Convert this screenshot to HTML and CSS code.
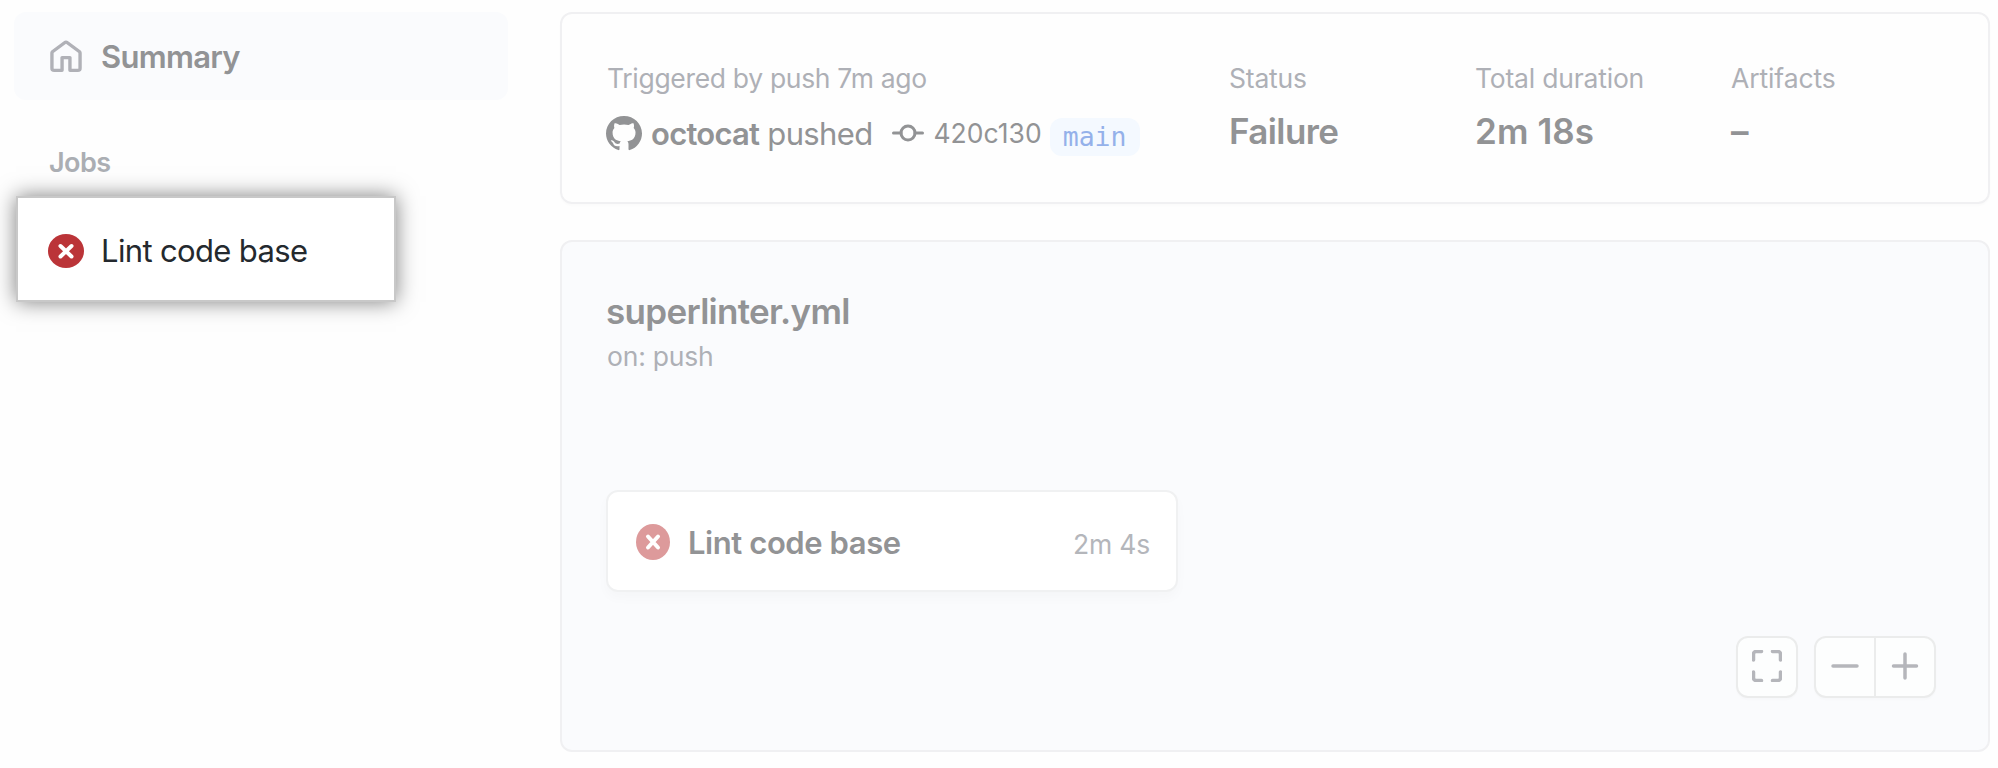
FILE: index.html
```html
<!DOCTYPE html>
<html lang="en"><head><meta charset="utf-8"><title>Workflow run</title><link rel="stylesheet" href="styles.css"></head>
<body>
<aside class="sidebar">
  <a class="nav-item"><svg class="home" width="36" height="34" viewBox="0 0 16 16" preserveAspectRatio="none"><path d="M6.906.664a1.749 1.749 0 0 1 2.187 0l5.250 4.200c.415.332.657.835.657 1.367v7.019A1.750 1.750 0 0 1 13.250 15h-3.500a.75.75 0 0 1-.75-.75V9H7v5.250a.75.75 0 0 1-.75.75h-3.500A1.750 1.750 0 0 1 1 13.250V6.230c0-.531.242-1.034.657-1.366l5.250-4.200Zm1.250 1.171a.25.25 0 0 0-.312 0l-5.250 4.200a.25.25 0 0 0-.094.196v7.019c0 .138.112.25.25.25H5.500V8.250a.75.75 0 0 1 .75-.75h3.500a.75.75 0 0 1 .75.75v5.250h2.750a.25.25 0 0 0 .25-.25V6.230a.25.25 0 0 0-.094-.195Z"/></svg><span>Summary</span></a>
  <h2 class="jobs-title">Jobs</h2>
  <a class="job-link"><svg width="36" height="34" viewBox="0 0 36 34"><ellipse class="red" cx="18" cy="17" rx="18" ry="17"/><path class="cross" d="M12.500 12l11 10.500M23.500 12l-11 10.500"/></svg><span>Lint code base</span></a>
</aside>
<main class="main">
  <section class="card run">
    <div>
      <div class="label trigger-label">Triggered by push 7m ago</div>
      <div class="trigger"><svg class="mark" width="36" height="35" viewBox="0 0 16 16" preserveAspectRatio="none"><path d="M8 0C3.580 0 0 3.580 0 8c0 3.540 2.290 6.530 5.470 7.590.4.070.55-.17.55-.38 0-.19-.01-.82-.01-1.490-2.010.37-2.530-.49-2.690-.94-.09-.23-.48-.94-.82-1.130-.28-.15-.68-.52-.01-.53.63-.01 1.080.58 1.230.82.72 1.210 1.870.87 2.330.66.07-.52.28-.87.51-1.070-1.780-.2-3.640-.89-3.640-3.950 0-.87.31-1.590.82-2.150-.08-.2-.36-1.020.08-2.120 0 0 .67-.21 2.200.82.64-.18 1.320-.27 2-.27s1.360.09 2 .27c1.530-1.040 2.200-.82 2.200-.82.44 1.100.16 1.920.08 2.120.51.56.82 1.270.82 2.150 0 3.070-1.870 3.750-3.650 3.950.29.25.54.73.54 1.480 0 1.070-.01 1.930-.01 2.200 0 .21.15.46.55.38A8.010 8.010 0 0 0 16 8c0-4.420-3.580-8-8-8z"/></svg>
        <b class="actor">octocat</b><span class="verb">pushed</span>
        <svg class="commit" width="32" height="20" viewBox="0 0 32 20"><circle cx="16" cy="10" r="7"/><path d="M1.500 10H9M23 10h7.500"/></svg>
        <span class="sha">420c130</span><span class="branch">main</span>
      </div>
    </div>
    <div><div class="label">Status</div><div class="value">Failure</div></div>
    <div><div class="label">Total duration</div><div class="value duration">2m 18s</div></div>
    <div><div class="label artifacts">Artifacts</div><div class="value">–</div></div>
  </section>
  <section class="card graph">
    <h1 class="file">superlinter.yml</h1>
    <div class="event">on: push</div>
    <div class="node"><svg width="34" height="36" viewBox="0 0 34 36"><ellipse class="red" cx="17" cy="18" rx="17" ry="18"/><path class="cross" d="M12 12.500l10 11M22 12.500l-10 11"/></svg><span class="node-name">Lint code base</span><span class="time">2m 4s</span></div>
    <div class="controls">
      <span class="btn"><svg width="30" height="32" viewBox="0 0 30 32"><path d="M9.500 1.500H4a2.500 2.500 0 0 0-2.500 2.500v6M20.500 1.500H26a2.500 2.500 0 0 1 2.500 2.500v6M9.500 30.500H4a2.500 2.500 0 0 1-2.500-2.500v-6M20.500 30.500H26a2.500 2.500 0 0 0 2.500-2.500v-6"/></svg></span>
      <span class="group"><span class="zoom"><svg width="28" height="28" viewBox="0 0 28 28"><path d="M2 14h24"/></svg></span><span class="zoom"><svg width="28" height="28" viewBox="0 0 28 28"><path d="M2.500 14h23M14 2v24"/></svg></span></span>
    </div>
  </section>
</main>
</body></html>
```
FILE: styles.css
```css
*{box-sizing:border-box}
body{margin:0;padding:12px 8px 0 14px;display:flex;gap:52px;height:768px;overflow:hidden;background:#fefefe;font-family:Inter,"Liberation Sans",sans-serif;color:#929395;white-space:nowrap}
svg{display:block;flex:none;fill:none;stroke-linecap:round;stroke-linejoin:round}
h1,h2{margin:0}
.sidebar{width:494px;flex:none}
.nav-item{display:flex;align-items:center;gap:17px;height:88px;padding:1px 0 0 34px;border-radius:12px;background:#fafbfd;font-size:31px;font-weight:600;letter-spacing:-.7px}
.home{fill:#b0b1b7}
.jobs-title{margin-top:47px;padding-left:35px;line-height:32px;font-size:27px;font-weight:600;letter-spacing:-.55px;color:#abaeb3}
.job-link{display:flex;align-items:center;gap:17px;width:380px;height:106px;margin:17px 0 0 2px;padding:3px 0 0 30px;border:2px solid #c8c8c8;background:#fff;box-shadow:0 0 20px rgba(0,0,0,.5);font-size:31px;letter-spacing:-.65px;color:#24292e}
.red{fill:#bb3438}
.cross{stroke:#fff;stroke-width:4}
.main{flex:1}
.card{border:2px solid #f0f0f2;border-radius:12px}
.run{display:grid;grid-template-columns:622px 246px 256px 1fr;height:192px;padding:48px 0 0 45px;box-shadow:0 2px 2px rgba(0,0,0,.015)}
.label,.event{line-height:32px;font-size:26.500px;letter-spacing:-.2px;color:#aeb0b6}
.trigger-label{letter-spacing:-.32px}
.artifacts{letter-spacing:-.1px}
.value{margin-top:15px;line-height:44px;font-size:35px;font-weight:600;letter-spacing:-.6px}
.duration{letter-spacing:.1px}
.trigger{display:flex;align-items:center;height:44px;margin-top:17px}
.mark{fill:#929395;margin-left:-1px}
.actor{margin-left:9px;font-size:31px;font-weight:600;letter-spacing:-.75px}
.verb{margin-left:8px;font-size:31px;letter-spacing:-.65px}
.commit{margin-left:20px;stroke:#929395;stroke-width:3}
.sha{margin-left:9px;font-size:26.500px}
.branch{margin:8px 0 0 8px;width:90px;height:38px;border-radius:12px;background:#f4f9ff;color:#94b1ea;font:26.500px/38px "DejaVu Sans Mono",monospace;text-align:center}
.graph{height:512px;margin-top:36px;padding:47px 52px 0 44px;background:#fafbfd}
.file{line-height:44px;font-size:35px;font-weight:600;letter-spacing:-.7px}
.event{margin:7px 0 0 1px}
.node{display:flex;align-items:center;width:572px;height:102px;margin-top:118px;padding:2px 26px 0 28px;border:2px solid #f0f1f2;border-radius:12px;background:#fff;box-shadow:0 6px 12px rgba(0,0,0,.025)}
.node .red{fill:#dd9a9b}
.node-name{margin-left:18px;font-size:31px;font-weight:600;letter-spacing:-.42px}
.time{margin-left:auto;padding-top:4px;font-size:26.500px;letter-spacing:-.2px;color:#b4b6bb}
.controls{display:flex;justify-content:flex-end;gap:16px;margin-top:44px}
.btn,.group{display:flex;height:62px;border:2px solid #ebecec;border-radius:12px;background:#fdfefe;box-shadow:0 2px 2px rgba(0,0,0,.015);stroke:#b5b6bb;stroke-width:3.500px}
.btn{width:62px;align-items:center;justify-content:center;padding-bottom:2px}
.group{width:122px}
.zoom{display:flex;flex:1;align-items:center;justify-content:center;padding-bottom:2px}
.zoom+.zoom{border-left:2px solid #ebecec}
```
